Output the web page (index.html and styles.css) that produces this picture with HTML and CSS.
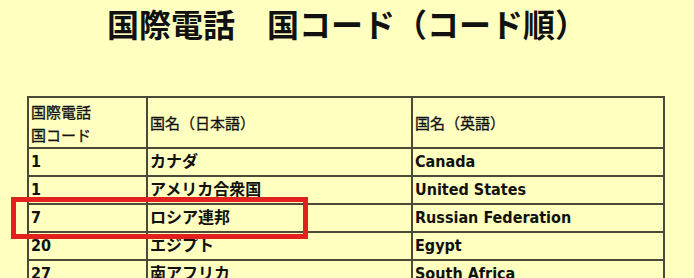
FILE: index.html
```html
<!DOCTYPE html>
<html lang="ja">
<head>
    <meta charset="UTF-8">
    <title>国際電話 国コード（コード順）</title>
    <link rel="stylesheet" href="styles.css">
</head>
<body>
    <h1>国際電話　国コード（コード順）</h1>
    <div class="wrap">
        <table class="codes">
            <tr>
                <th class="c1">国際電話<br>国コード</th>
                <th class="c2">国名（日本語）</th>
                <th class="c3">国名（英語）</th>
            </tr>
            <tr><td>1</td><td>カナダ</td><td>Canada</td></tr>
            <tr><td>1</td><td>アメリカ合衆国</td><td>United States</td></tr>
            <tr><td>7</td><td>ロシア連邦</td><td>Russian Federation</td></tr>
            <tr><td>20</td><td>エジプト</td><td>Egypt</td></tr>
            <tr><td>27</td><td>南アフリカ</td><td>South Africa</td></tr>
            <tr><td>30</td><td>ギリシャ</td><td>Greece</td></tr>
            <tr><td>31</td><td>オランダ</td><td>Netherlands</td></tr>
        </table>
        <!-- 強調枠 -->
        <div class="mark"></div>
    </div>
</body>
</html>
```

FILE: styles.css
```css
body {
    margin: 0;
    background-color: #ffffc0;
    font-family: "DejaVu Sans Condensed", "DejaVu Sans", "Noto Sans CJK JP", sans-serif;
    color: #111;
}
h1 {
    margin: 0;
    text-align: center;
    font-family: "Noto Sans CJK JP", sans-serif;
    font-size: 32px;
    font-weight: bold;
    line-height: 46px;
    height: 96px;
}
.wrap {
    position: relative;
    padding-left: 27px;
}
.codes {
    border-collapse: collapse;
    width: 638px;
    border: 2px solid #4a4a38;
}
.codes th,
.codes td {
    border: 2px solid #4a4a38;
    text-align: left;
    vertical-align: middle;
    padding: 1px 2px;
}
.codes th {
    font-family: "Noto Sans CJK JP", sans-serif;
    font-weight: normal;
    font-size: 15px;
    line-height: 23px;
    height: 47px;
    -webkit-text-stroke: 0.3px #111;
}
.codes td {
    font-size: 16px;
    font-weight: bold;
    line-height: 22px;
    height: 24px;
}
.codes .c1 {
    width: 113px;
}
.codes .c2 {
    width: 259px;
}
.mark {
    position: absolute;
    left: 11px;
    top: 101px;
    width: 287px;
    height: 32px;
    border: 5px solid #e2211f;
}
```
